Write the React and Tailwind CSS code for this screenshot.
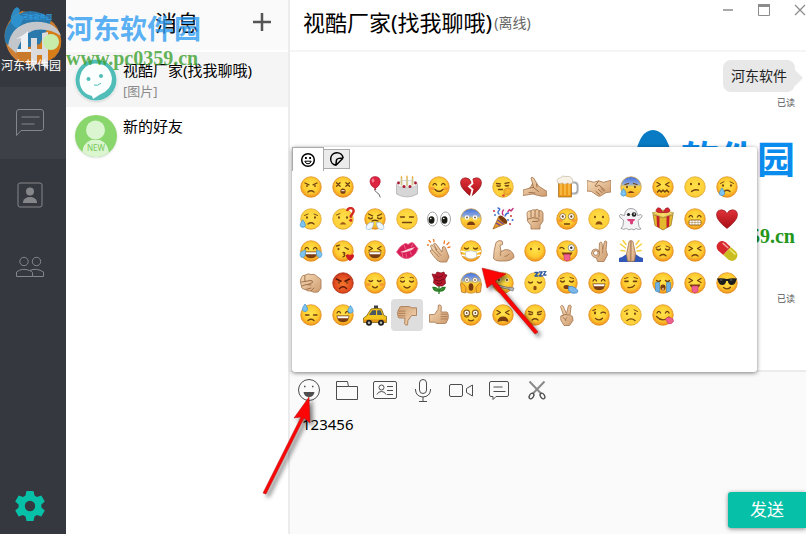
import React, { useState } from 'react';
import clsx from 'clsx';

const BROWN = '#70420f';

/* ---------- emoji parts (24 x 24 canvas) ---------- */

function EmojiDefs() {
  return (
    <svg className="absolute h-0 w-0" aria-hidden="true">
      <defs>
        <radialGradient id="faceYellow" cx="50%" cy="42%" r="58%">
          <stop offset="0" stopColor="#ffe44d" />
          <stop offset="0.65" stopColor="#fdc92e" />
          <stop offset="1" stopColor="#f08f1c" />
        </radialGradient>
        <radialGradient id="facePale" cx="50%" cy="45%" r="60%">
          <stop offset="0" stopColor="#ffe04a" />
          <stop offset="0.8" stopColor="#fdcf38" />
          <stop offset="1" stopColor="#e9a92c" />
        </radialGradient>
        <radialGradient id="faceRed" cx="50%" cy="55%" r="58%">
          <stop offset="0" stopColor="#f4752c" />
          <stop offset="0.7" stopColor="#e04a20" />
          <stop offset="1" stopColor="#b92d14" />
        </radialGradient>
        <linearGradient id="faceBlue" x1="0" y1="0" x2="0" y2="1">
          <stop offset="0" stopColor="#3f6fe0" />
          <stop offset="0.35" stopColor="#8fa9dc" />
          <stop offset="0.5" stopColor="#fdd43c" />
          <stop offset="1" stopColor="#f5a623" />
        </linearGradient>
        <linearGradient id="skin" x1="0" y1="0" x2="1" y2="1">
          <stop offset="0" stopColor="#f6dcb8" />
          <stop offset="1" stopColor="#cf9c70" />
        </linearGradient>
        <linearGradient id="heartRed" x1="0" y1="0" x2="0" y2="1">
          <stop offset="0" stopColor="#e0333a" />
          <stop offset="1" stopColor="#a80d14" />
        </linearGradient>
      </defs>
    </svg>
  );
}

const FACE_FILL = {
  yellow: ['url(#faceYellow)', '#dd8a1d'],
  pale: ['url(#facePale)', '#dca42c'],
  red: ['url(#faceRed)', '#a52a12'],
  blue: ['url(#faceBlue)', '#c99a3c'],
};

function Face({ tone = 'yellow', children }) {
  const [fill, stroke] = FACE_FILL[tone];
  return (
    <>
      <circle cx="12" cy="12" r="10.3" fill={fill} stroke={stroke} strokeWidth="0.7" />
      {children}
    </>
  );
}

const Line = ({ d, w = 1.3, c = BROWN }) => (
  <path d={d} fill="none" stroke={c} strokeWidth={w} strokeLinecap="round" strokeLinejoin="round" />
);
const Skin = ({ d }) => <path d={d} fill="url(#skin)" stroke="#a3734c" strokeWidth="0.8" strokeLinejoin="round" />;
const Dots = ({ y = 9.5, dx = 4, r = 1.3 }) => (
  <g fill={BROWN}>
    <ellipse cx={12 - dx} cy={y} rx={r * 0.8} ry={r} />
    <ellipse cx={12 + dx} cy={y} rx={r * 0.8} ry={r} />
  </g>
);
const Happy = () => <Line d="M6 10q1.8-3.4 3.6 0M14.4 10q1.8-3.4 3.6 0" />;
const Closed = ({ y = 10 }) => <Line d={`M5.5 ${y}q2.2 2 4 0M14.5 ${y}q2.2 2 4 0`} />;
const Squeeze = () => <Line d="M6 7.5l3.5 2L6 11.5M18 7.5l-3.5 2 3.5 2" />;
const Frown = ({ y = 17 }) => <Line d={`M9 ${y}q3-2.6 6 0`} />;
const Smile = () => <Line d="M8 14.5q4 4 8 0" />;
const Blush = () => (
  <g fill="#f57a3a" opacity="0.6">
    <ellipse cx="5.5" cy="13.5" rx="2.4" ry="1.6" />
    <ellipse cx="18.5" cy="13.5" rx="2.4" ry="1.6" />
  </g>
);
const Drop = ({ x, y }) => (
  <path d={`M${x} ${y}q3.4 4.6 2.4 6.4q-2.4 2.6-4.8 0q-1-1.8 2.4-6.4z`} fill="#7cc4ef" stroke="#3f92cf" strokeWidth="0.7" />
);
const Grin = () => (
  <>
    <path d="M5.5 12.5h13q-.6 6.8-6.5 6.8t-6.5-6.8z" fill="#7a3d10" />
    <path d="M6.3 13.2h11.4l-.5 2H6.8z" fill="#fff" />
  </>
);
const HEART = 'M12 21.5Q1.5 13.5 1.5 7.8Q1.8 3 6.4 2.8Q10.4 2.8 12 6.6Q13.6 2.8 17.6 2.8Q22.2 3 22.5 7.8Q22.5 13.5 12 21.5z';
const THUMB = 'M2.5 11.5h5l3.6-5.2.3-4.2q2.3-1 3 1.5l-.4 5.4h5.6q1.8.5 1.2 2.1q1.3 1 .4 2.5q.8 1.2-.4 2.3q.4 1.6-1 2.2q.1 2.2-2 2.4H9.8l-2.4-1.3H2.5z';

/* ---------- emoji list ---------- */

const EMOJIS = [
  { name: 'angry', art: <Face><Line d="M6 8l4 1.8M18 8l-4 1.8" /><Dots y={11} r={1.1} /><Frown /></Face> },
  { name: 'dizzy', art: <Face><Line d="M5.500 7.800l3.600 3.400M9.100 7.800l-3.600 3.400M14.900 7.800l3.600 3.400M18.500 7.800l-3.600 3.400" /><ellipse cx="12" cy="16.200" rx="2.600" ry="2.600" fill="#7a3d10" /><path d="M10.400 15.200h3.200v1h-3.200z" fill="#fff" /></Face> },
  { name: 'balloon', art: <><Line c="#555" w={0.9} d="M12 13q-1 3 1.800 4.600q3 1.200 3.400 4.400" /><path d="M12 1.500q5.500.3 5.300 5.400q-.6 4-5 6.600q-5-2.600-5.300-6.600q-.2-5 5-5.400z" fill="#dd2440" stroke="#a91530" strokeWidth=".6" /><ellipse cx="10" cy="5.500" rx="1.300" ry="2" fill="#f5808d" /><path d="M11 14.800l1.200-1.800 1.200 1.800z" fill="#b11832" /></> },
  { name: 'cake', art: <><path d="M1.500 9v10q10.500 6 21 0V9z" fill="#d6d6d6" stroke="#a0a0a0" strokeWidth=".6" /><ellipse cx="12" cy="9" rx="10.500" ry="3.600" fill="#f6f6f6" stroke="#b5b5b5" strokeWidth=".5" /><Line c="#d2c58c" w={1.800} d="M6.500 9.500V3.500M12 10.500V3M17.500 9.500V3.500" /><path d="M6.500 .5l1 2.500h-2zM12 0l1 2.500h-2zM17.500 .5l1 2.500h-2z" fill="#f5a623" /><g fill="#a61a32"><circle cx="3.500" cy="8" r="1.400" /><circle cx="9" cy="11.500" r="1.500" /><circle cx="15" cy="11.500" r="1.500" /><circle cx="20.500" cy="8" r="1.400" /></g></> },
  { name: 'blush', art: <Face><Blush /><Happy /><Smile /></Face> },
  { name: 'broken heart', art: <><path d={HEART} fill="url(#heartRed)" stroke="#7e0b12" strokeWidth=".6" /><path d="M12.500 4l1 4.500-3.500 3 3.500 3-2 8" fill="none" stroke="#fff" strokeWidth="1.800" /></> },
  { name: 'hush', art: <Face tone="pale"><Line d="M5.500 8.500l4 .3M14 8.300l4-.6" /><Line d="M6 10.800q1.600.8 3.200 0M14.300 10.500q1.600.8 3.200 0" w={1.500} /><Line d="M7.500 14.500h4" /><path d="M13 15q3-3 6.500-1.800q2 3-1 5.600q-3 1.800-5.600-.4z" fill="#f7b52c" stroke="#c9822a" strokeWidth=".7" /><circle cx="12.500" cy="20.500" r="1.300" fill="#e54a30" /></Face> },
  { name: 'nudge', art: <><Skin d="M0 15l7-2 2.500-4.500L8 3q.8-1.800 2.500 0l5 8 8.500 5.500v4.300q-5 1.200-9-.3l-5-1.500L0 20.500z" /><Line c="#996a44" w={0.9} d="M9.500 8.500l1 4 5 4M7 13l3.500-.5M6 17.500l6 .5M13.500 9l.5 3" /></> },
  { name: 'beer', art: <><path d="M16 7.500h4q2.600.5 2.600 3.500v4.500q-.4 3-3 3H16" fill="none" stroke="#a8acb0" strokeWidth="2" /><path d="M3.500 5h13v17h-13z" fill="#ec9a1c" stroke="#a1671b" strokeWidth=".7" /><path d="M6 9v11M10 9v11M14 9v11" stroke="#f9c24d" strokeWidth="1.500" /><path d="M2.500 7.500Q.8 3.500 5 3q2-3 6-1.500q4-.8 5.500 1.500q2.500 1.500.8 5q-3 2-4.800 0q-3 2.500-5 0q-3 1.500-5-.5z" fill="#f7f1e6" stroke="#bdb29b" strokeWidth=".6" /></> },
  { name: 'handshake', art: <><Skin d="M0 5.500l7 1.800 4.500-1.500 5 1.500 7.500-2V17l-5 .6-5.500 3.400q-2 .6-3.500-.7L4.500 16.500 0 16z" /><Line c="#996a44" w={0.9} d="M11.500 6l-3.500 5q1.500 1.500 4-1l6 5.500M9 16.500l3.500 3M11.500 14.500l3.500 3M14 13.500l3 2.800" /></> },
  { name: 'cold sweat', art: <Face tone="blue"><Line d="M6 9.500l3.500-1M18 9.500l-3.500-1" /><Dots y={12} r={1.2} /><path d="M8.500 18q3.500-4 7 0z" fill="#7a3d10" /><Drop x={4.5} y={13.5} /></Face> },
  { name: 'confounded', art: <Face><Squeeze /><Line d="M6.500 17l1.800-2 1.900 2 1.800-2 1.900 2 1.800-2 1.800 2" w={1.400} /></Face> },
  { name: 'confused', art: <Face tone="pale"><Dots y={9} /><Line d="M8.500 16.500q3-2.600 7-1.300" /></Face> },
  { name: 'cry', art: <Face><Line d="M5.500 8.500l3.500-1.800M18.500 8.500L15 6.700" w={0.9} /><Dots y={10.5} r={1.2} /><Frown y={16.5} /><Drop x={7} y={13} /></Face> },

  { name: 'disappointed relieved', art: <Face tone="pale"><Line d="M5.500 8.500L9 7M18.500 8.500L15 7" w={0.9} /><Dots y={10.5} r={1.2} /><Frown y={17} /><Drop x={3.8} y={12.8} /></Face> },
  { name: 'puzzled', art: <Face tone="pale"><Line d="M5.500 8l3.500-1.500" w={0.9} /><Dots y={10.5} r={1.2} /><path d="M8.500 17.500q3.500-5 7 0z" fill="#a25b16" /><path d="M16 4q1-3.500 4.500-2.800q3.500 1.500 1.300 5l-2 2.600v2" fill="none" stroke="#d42a26" strokeWidth="2.400" /><circle cx="19.800" cy="13.300" r="1.500" fill="#d42a26" /></Face> },
  { name: 'triumph', art: <Face><Line d="M5.500 7l4 1.800M18.500 7l-4 1.800" /><Closed y={10.8} /><Line d="M9 14q3-1.500 6 0" /><path d="M9.500 15.500Q5 15 3.500 19q-1.500 3.500 2.500 3.500q4.500-.5 4.500-7zM14.500 15.500Q19 15 20.500 19q1.500 3.500-2.500 3.500q-4.500-.5-4.500-7z" fill="#f0f7fd" stroke="#8fb8dc" strokeWidth=".7" /></Face> },
  { name: 'expressionless', art: <Face tone="pale"><Line d="M5.500 10h4M14.500 10h4M7.500 15.500h9" /></Face> },
  { name: 'eyes', art: <><g fill="#fff" stroke="#9a9a9a" strokeWidth=".9"><ellipse cx="5.500" cy="12" rx="5" ry="7" /><ellipse cx="18.500" cy="12" rx="5" ry="7" /></g><g fill="#1b1b16"><ellipse cx="4.500" cy="13" rx="3" ry="3.700" /><ellipse cx="17.500" cy="13" rx="3" ry="3.700" /></g><circle cx="3.800" cy="11.500" r=".8" fill="#fff" /><circle cx="16.800" cy="11.500" r=".8" fill="#fff" /></> },
  { name: 'fearful', art: <Face tone="blue"><g fill="#fff"><circle cx="8" cy="10.500" r="2.300" /><circle cx="16" cy="10.500" r="2.300" /></g><Dots y={10.5} r={1} /><path d="M8 18q.3-3.500 4-3.500t4 3.500z" fill="#7a3d10" /></Face> },
  { name: 'party popper', art: <><path d="M2 22L8 9q5 2 8 7z" fill="#e39a2b" stroke="#9c5d16" strokeWidth=".7" /><path d="M5 16l4.500 2.500M6.500 13l6 4" stroke="#6b3fa0" strokeWidth="1.200" /><ellipse cx="12" cy="12.500" rx="2.200" ry="5.200" transform="rotate(-48 12 12.500)" fill="#7a3d10" /><Line c="#3e6fd1" w={1.4} d="M8 7Q6 5 8 3.500T7 1M14 9q1-3 3.500-3" /><Line c="#c7327a" w={1.4} d="M12 8q-1.500-3 .5-5M17 4.500l1.500-2 1.500 1.500 2-2.500" /><g fill="#d13438"><circle cx="3" cy="4" r="1" /><circle cx="20" cy="9" r="1" /><circle cx="19" cy="17" r="1" /></g><g fill="#3e6fd1"><circle cx="21.500" cy="13" r="1" /><circle cx="4" cy="8" r="1" /><circle cx="17" cy="13" r=".9" /></g></> },
  { name: 'fist', art: <><Skin d="M4 6q1-3 4-2 1-2 4-1 2.500-1.500 4 .5 3.500-.5 4 2.500v8l-3 4.500V22H8v-3.500L4.500 14z" /><Line c="#996a44" w={0.9} d="M8 4v6M12 3.500V10M16 4v6M5 12q5-2.500 10-.5 3 2-1 3H9.500" /></> },
  { name: 'flushed', art: <Face><Blush /><g fill="#fff" stroke="#8f6320" strokeWidth=".8"><circle cx="7.700" cy="9.500" r="3" /><circle cx="16.300" cy="9.500" r="3" /></g><Dots y={9.5} dx={4.3} r={1.3} /><Line d="M9.500 17h5" /></Face> },
  { name: 'frowning', art: <Face tone="pale"><Dots y={10} r={1.2} /><path d="M8.500 17.800q.3-3.500 3.500-3.500t3.500 3.500q-3.500-1.300-7 0z" fill="#8b4d12" /></Face> },
  { name: 'ghost', art: <><path d="M12 1.500q6 0 6.500 7l3.500-1q2 1 .5 3l-3.500 3 1 6 2 2.500q-3 1-5-.5-2 2.500-4.500.5-3 2-5-.5-3 1.500-5.500 0l2-3 .5-5.500L1 10.500q-1.500-2.500.5-3l4 1q.5-7 6.500-7z" fill="#f3f3f5" stroke="#8d8d93" strokeWidth=".8" /><circle cx="9.500" cy="7.500" r="1.600" fill="#222" /><circle cx="15" cy="7.500" r="2.300" fill="#222" /><circle cx="15.300" cy="7" r=".8" fill="#fff" /><path d="M8 12h8q-.5 2.500-2 2.500v2q-1.500 2-3 0v-2Q8.500 14.500 8 12z" fill="#d9407c" /></> },
  { name: 'gift', art: <><path d="M2 7.500l10 3.500 10-3.500-2 11-8 4.500-8-4.500z" fill="#e5b92d" stroke="#95701a" strokeWidth=".7" /><path d="M1 6l11-3 11 3-11 4.500z" fill="#f6dc66" stroke="#a58222" strokeWidth=".6" /><path d="M5.500 8.500l3 1.200V21L6 19.500zM18.500 8.500l-3 1.200V21l2.500-1.500z" fill="#c21f2b" /><path d="M12 5.500Q6 6.500 5 3.500Q6-.5 9.500 1.500zM12 5.500q6 1 7-2Q18-.5 14.500 1.500z" fill="#d4242f" stroke="#8e121b" strokeWidth=".6" /></> },
  { name: 'grimacing', art: <Face><Happy /><rect x="6" y="13" width="12" height="5" rx="1.500" fill="#fff" stroke="#8b5a1c" strokeWidth=".9" /><path d="M6 15.500h12M9 13v5M12 13v5M15 13v5" stroke="#b08a50" strokeWidth=".6" /></Face> },
  { name: 'heart', art: <path d={HEART} fill="url(#heartRed)" stroke="#8e0b12" strokeWidth=".6" /> },

  { name: 'joy', art: <Face><Happy /><Grin /><path d="M6.500 11Q1 12 1 16q.8 3.500 3.500 2.300Q7 17 6.500 11zM17.500 11q5.500 1 5.500 5-.8 3.500-3.500 2.300-2.500-1.300-2-7.300z" fill="#7cc4ef" stroke="#3f92cf" strokeWidth=".6" /></Face> },
  { name: 'kissing heart', art: <Face><Line d="M5.500 7l3-.8M14 8.500l3.500 1.800" /><ellipse cx="7.500" cy="10" rx="1" ry="1.300" fill={BROWN} /><Line d="M12 13.500q3 .3 1 2 2 1.500-1 2.300" /><path d="M19 22q-4.500-3-4-5.800 1.500-2 4 0 2.500-2 4 0 .5 2.800-4 5.800z" fill="#cf1c24" /></Face> },
  { name: 'laughing', art: <Face><Squeeze /><Grin /></Face> },
  { name: 'kiss mark', art: <><path d="M1.500 13Q5 6.500 10 4.500q1.500-.5 3 1Q17 2 19 4.500q2 3 4 5-2 7-8.500 9.500-7 2.500-13-6z" fill="#d81f55" stroke="#e8648a" strokeWidth=".8" /><path d="M5 13q4-1 8-3l7-2Q17.500 11.500 13 12.500q-5 1.500-8 .5z" fill="#fbd3de" /><path d="M7 14l1 4M11 14.500l.5 4M15 12.500l1.500 3.500M9 6l1.500 4M17.500 5l-1 3" stroke="#f07a9c" strokeWidth=".8" /></> },
  { name: 'clap', art: <><Skin d="M3 12q1-2 2.500-.5L3.500 7q1-2 2.500-.5L10 11 6.500 5q1.300-1.500 2.500 0l6 8 .5-5q2-1.500 3 1l3.500 9-2.500 5h-6q-4-1-10.500-11z" /><Line c="#a3734c" w={0.8} d="M6 11.500l6 6.500M8.500 10.500l5.500 6" /><Line c="#f07c2a" w={1.3} d="M3.500 3L2 1.500M7 2.500L6.500 0M1.500 6L0 6M17 4.500l.5-2.500M20 5.500l2-2M21 8.500l2-.5" /></> },
  { name: 'mask', art: <Face><Closed y={9} /><path d="M1.800 12l5.500 1.500M22.200 12l-5.500 1.500M2.500 16l5 1M21.500 16l-5 1" stroke="#fff" strokeWidth="1.400" /><path d="M6.500 13q5.500-2.500 11 0v5q-5.500 3.500-11 0z" fill="#fff" stroke="#b9c3c9" strokeWidth=".7" /></Face> },
  { name: 'muscle', art: <><Skin d="M5 3.500Q7.500.5 11 2q1 2 .5 3.500L9 6.500l1 6q4-3 8-1.500 5 2.500 5 7.500-4 4-11 3.500-7 .5-9.500-2.500Q2.500 12 5 3.500z" /><Line c="#a3734c" w={0.9} d="M10 12.500q-1.500 2-.5 4M14 17.500q3-.5 4-2.500" /></> },
  { name: 'no mouth', art: <Face><Dots y={10} r={1.2} /></Face> },
  { name: 'winking tongue', art: <Face><circle cx="16.300" cy="8.800" r="3.200" fill="#fff" stroke="#777" strokeWidth=".8" /><circle cx="16.300" cy="8.800" r="1.200" fill="#333" /><Line d="M5 9q2-1.500 4 .8" /><path d="M6.500 13.500h11q-1.500 4-5.500 4t-5.500-4z" fill="#7a3d10" /><path d="M9 15.300h6V20q-3 4-6 0z" fill="#f0608f" stroke="#c43e6c" strokeWidth=".6" /></Face> },
  { name: 'ok hand', art: <><Skin d="M12 13l.5-9q1.300-2 2.500 0l.7 6L17.500 2.500q1.600-1.500 2.300.5L19 11l1.500 5-3.500 6.500h-6.500l-1-3.500Q4.500 18 4.500 14q.5-4 4-4 3 0 3.500 3z" /><circle cx="8.800" cy="14" r="2.300" fill="#fff" stroke="#a3734c" strokeWidth=".8" /><Line c="#a3734c" w={0.8} d="M15.700 10v4M12.500 13q1 3-1.500 5" /></> },
  { name: 'pray', art: <><Line c="#f7cf3e" w={1.5} d="M6.500 9L1.500 5M7 5.500l-3-4M17.500 9l5-4M17 5.500l3-4M6 12l-4-.5M18 12l4-.5" /><path d="M0 23v-4q4-1 7.500-4l1.500 4h6l1.500-4q3.500 3 7.500 4v4z" fill="#3157b7" /><Skin d="M11.700 1.500q-2.200 0-2.200 4L7.500 15l1 7 3.500.5z" /><Skin d="M12.300 1.500q2.200 0 2.200 4l2 9.500-1 7-3.500.5z" /></> },
  { name: 'pensive', art: <Face><Line d="M5 8.500l4-1.500M19 8.500L15 7" w={0.9} /><Closed /><Frown y={16.8} /></Face> },
  { name: 'persevere', art: <Face><Squeeze /><Frown y={17} /></Face> },
  { name: 'pill', art: <g transform="rotate(42 12 12)"><path d="M12 6.500H5q-5 1-5 5.500t5 5.500h7z" fill="#d6262c" /><path d="M12 6.500h7q5 1 5 5.500t-5 5.500h-7z" fill="#c9bd1f" /><path d="M4 9h6.500" stroke="#f6a3a0" strokeWidth="1.500" strokeLinecap="round" /><path d="M13.500 9H20" stroke="#eee678" strokeWidth="1.500" strokeLinecap="round" /></g> },

  { name: 'punch', art: <><Skin d="M2 7q1-3 4.500-3Q9 2 12 3.500q4-1 5.500 1.500L22 8.500v9L19 21q-5 1-7-1-4 .5-5.500-1.500Q2 18 2.500 15 .5 11.500 2 7z" /><Line c="#996a44" w={0.9} d="M6 4.500q-.5 4 0 6l5-1q3-.5 2.500 2L9 13.500M2.500 11l4-.5M3 15l4-1.500 5 .5M7 18.500l5-1.500M12 20l3-3" /></> },
  { name: 'rage', art: <Face tone="red"><Line d="M5.500 8l4.500 2.200M18.500 8L14 10.200" c="#5b1608" w={1.6} /><Dots y={11.5} r={1.2} /><Line d="M8.500 17.500q3.500-3.400 7 0" c="#5b1608" /></Face> },
  { name: 'relaxed', art: <Face><Blush /><Line d="M6 9.500q1.800 2 3.600 0M14.400 9.500q1.800 2 3.600 0" /><Line d="M9.500 15.500q2.500 2.600 5 0" /></Face> },
  { name: 'relieved', art: <Face><Line d="M5.500 7q1.800-1.300 3.500-.5M18.500 7q-1.800-1.300-3.500-.5" w={0.9} /><Closed /><Line d="M9 15.500q3 3 6 0" /></Face> },
  { name: 'rose', art: <><path d="M12 13v10M12 20q-5 .5-6-3.500 4-.5 6 3.500zM12 20q5 .5 6-3.500-4-.5-6 3.500z" fill="#3d9a35" stroke="#2b7a27" strokeWidth="1.300" /><path d="M5 3l3.500.5L10 1l4 1 3-1 .8 2.500 2.200.5-2 4 .5 4.500-3 2.500h-5L6.500 12 7 8z" fill="#b3152b" stroke="#7b0b1a" strokeWidth=".7" /><path d="M8 5q4 3 8-1M8 9q4 2.500 9-1M10 12.500q3 .5 5-1" fill="none" stroke="#7b0b1a" strokeWidth="1" /></> },
  { name: 'scream', art: <Face tone="blue"><g fill="#fff" stroke="#8f6320" strokeWidth=".5"><circle cx="8" cy="9" r="2.500" /><circle cx="16" cy="9" r="2.500" /></g><Dots y={9} r={0.9} /><ellipse cx="12" cy="16" rx="2.400" ry="3.800" fill="#7a3d10" /><path d="M1.500 13q1.500-2.500 3 0L7 16.500 6.500 22l-4-1zM22.500 13q-1.500-2.500-3 0L17 16.500l.5 5.500 4-1z" fill="#fbb32c" stroke="#b26e1c" strokeWidth=".7" /></Face> },
  { name: 'zipped', art: <Face><g fill="#fff7d0"><circle cx="8" cy="9" r="2" /><circle cx="16" cy="9" r="2" /></g><Dots y={9} r={1.2} /><Line d="M7 15l11 2.500" c="#77715f" w={2.6} /><Line d="M7 15l11 2.500" c="#d5d0c0" w={0.8} /><path d="M18 16l5 1-1 3-4-1z" fill="#b4b4b4" stroke="#6d6d6d" strokeWidth=".6" /></Face> },
  { name: 'sleeping', art: <Face tone="pale"><Closed y={11} /><ellipse cx="12" cy="17" rx="1.700" ry="2.200" fill="#8b4d12" /><Line c="#2d5aa0" w={1.4} d="M12 1.500h3l-3 3.500h3M16.500 1h2.700l-2.700 4h2.700M20.500 0H23l-2.500 4H23" /></Face> },
  { name: 'sleepy', art: <Face><Line d="M5.500 7.500L9 6.500M18.500 7.500L15 6.500" w={0.9} /><Closed /><ellipse cx="11.500" cy="16" rx="3" ry="2" fill="#7a3d10" /><path d="M13.500 15.500q4-1 7 1.500 4 3.500 1 5-5 1.500-8-2.500z" fill="#7ab8ea" stroke="#3b82c4" strokeWidth=".7" /></Face> },
  { name: 'grinning', art: <Face><Happy /><Grin /></Face> },
  { name: 'smirk', art: <Face><Line d="M5.500 7.500l3.500-1M18.500 7.500l-3.500-1" w={0.9} /><Line d="M6 10.300h3M14.500 10.300h3" w={1.7} /><Line d="M9 16.500q4 .8 6.500-2.200" /></Face> },
  { name: 'sob', art: <Face><Closed y={9.5} /><path d="M4.500 11.500h4v10l-4-1.500zM15.500 11.500h4V20l-4 1.500z" fill="#6db0e6" stroke="#3e86c4" strokeWidth=".6" /><ellipse cx="12" cy="16.500" rx="2.600" ry="3" fill="#7a3d10" /><circle cx="12" cy="18" r="1.300" fill="#d9a16c" /></Face> },
  { name: 'tongue', art: <Face><Squeeze /><path d="M6.500 13.500h11q-1.500 4-5.500 4t-5.500-4z" fill="#7a3d10" /><path d="M9 15h6v5q-3 4-6 0z" fill="#f0608f" stroke="#c43e6c" strokeWidth=".6" /></Face> },
  { name: 'sunglasses', art: <Face><path d="M2 7.500q5-.8 10 .5 5-1.300 10-.5l-.8 1.800q-.8 4.700-4.700 4.700-3 0-3.700-4h-1.600q-.7 4-3.700 4-3.900 0-4.700-4.700z" fill="#1d1d1d" /><path d="M5 9h2.500M15 9h2.500" stroke="#7a7a7a" strokeWidth=".9" /><Line d="M8.500 16.500q4 3 7-.3" /></Face> },

  { name: 'sweat', art: <Face><Line d="M6.500 12h3.500M14.500 12H18" /><Frown y={17.5} /><Drop x={6} y={1} /></Face> },
  { name: 'sweat smile', art: <Face><Happy /><Grin /><Drop x={19.5} y={2.5} /></Face> },
  { name: 'taxi', art: <><path d="M11 2.500h4v3h-4z" fill="#3f3f3f" /><path d="M3.500 13L8 6q5-1.500 10.500 0l2.500 6.500 2.500 1v6H.5V15z" fill="#f4c51e" stroke="#7a5d10" strokeWidth=".8" /><path d="M6 12l3.300-4.800H13V12zM14.200 7.200h3.300l2 4.800h-5.300z" fill="#4b5864" /><path d="M.5 16.500h23v2.500H.5z" fill="#e39318" /><g fill="#1f1f1f"><circle cx="6" cy="19.800" r="3" /><circle cx="18" cy="19.800" r="3" /></g><g fill="#bbb"><circle cx="6" cy="19.800" r="1.200" /><circle cx="18" cy="19.800" r="1.200" /></g></> },
  { name: 'thumbs down', art: <g transform="matrix(-1 0 0 1 24 0) rotate(180 12 12) translate(24 0) scale(-1 1)"><Skin d={THUMB} /><Line c="#a3734c" w={0.8} d="M14 11.200h6M14 13.600h6.300M14 15.900h6" /></g> },
  { name: 'thumbs up', art: <><Skin d={THUMB} /><Line c="#a3734c" w={0.8} d="M14 11.200h6M14 13.600h6.300M14 15.900h6" /></> },
  { name: 'weary', art: <Face><g fill="#fff" stroke="#8f6320" strokeWidth="1.200"><circle cx="7.700" cy="10" r="2.900" /><circle cx="16.300" cy="10" r="2.900" /></g><Dots y={10} dx={4.3} r={1} /><Line d="M5.500 13.500q2 1.500 4 .3M14.500 13.800q2 1.200 4-.3" w={0.9} /><Line d="M9.500 17q2.500 1.800 5 0" /></Face> },
  { name: 'tired', art: <Face><Squeeze /><path d="M6.500 19q.5-5.500 5.500-5.500t5.500 5.500q-5.500-2-11 0z" fill="#7a3d10" /></Face> },
  { name: 'unamused', art: <Face><Line d="M5.500 8.500l4 .8M18.500 8.500l-4 .8" /><Line d="M6 11q2 1 3.500 0M14.500 11q2 1 3.500 0" w={1.5} /><Frown y={17} /></Face> },
  { name: 'victory', art: <><Skin d="M8.500 12L5.500 3.500q1-2 2.500-.5l3.500 7.500 2-8q1.700-1.300 2.700.5L15 12l2.500 1.500.5 4-3.500 5H9L5.800 17v-4z" /><Line c="#a3734c" w={0.9} d="M7 13l3-1.500 4 .5M8 14.500l3 2.500M12 14.500q-2 .8-1.500 3" /></> },
  { name: 'wink', art: <Face><ellipse cx="8" cy="10" rx="1.100" ry="1.400" fill={BROWN} /><Line d="M6 7.500l2.500-1M14 10q2-1.800 4.500 0" /><Line d="M8.500 15.500q4 3 7-.3" /></Face> },
  { name: 'worried', art: <Face tone="pale"><Line d="M5.500 8.500L9 6.800M18.500 8.500L15 6.800" w={0.9} /><Dots y={10.8} r={1.2} /><Line d="M8 17.500q4-3.200 8 0" /></Face> },
  { name: 'yum', art: <Face><Happy /><Line d="M5.500 13.500q6 6.500 12.500.5" /><path d="M14.500 16.500q1-3 4.500-2 4 1 3.500 4-2 3.500-5.500 2z" fill="#f0608f" stroke="#c43e6c" strokeWidth=".6" /></Face> },
];

/* ---------- line icons ---------- */

const Icon = ({ size = 24, box = 24, className, children }) => (
  <svg width={size} height={size} viewBox={`0 0 ${box} ${box}`} fill="none" stroke="currentColor" className={className} aria-hidden="true">
    {children}
  </svg>
);

const TOOLS = [
  { name: '表情', art: <><circle cx="12" cy="12" r="10.500" /><path d="M7 8.500h1.500M15 8.500h1.500" strokeWidth="1.500" /><path d="M6.500 14h11q-.8 5-5.500 5t-5.500-5z" fill="currentColor" stroke="none" /></> },
  { name: '文件', art: <path d="M1.500 21.500v-18h11l1 5h9v13zM1.500 8.500h12" /> },
  { name: '名片', art: <><rect x=".5" y="3.500" width="23" height="17" rx="1.500" /><circle cx="8.500" cy="9.500" r="2.500" /><path d="M4 16.500q1-3 4.500-3t4.500 3M14 8.500h6M14 12.500h6M14 16.500h6" /></> },
  { name: '语音', art: <><rect x="8.500" y="1.500" width="7" height="14" rx="3.500" /><path d="M4.500 11v1q.5 6.500 7.500 7 7-.5 7.500-7v-1M12 19v4M8 23.500h8" /></> },
  { name: '视频', art: <><rect x=".5" y="6.500" width="13" height="12" rx="1.500" /><path d="M17.500 10.500l6-3.500v11l-6-3.500z" /></> },
  { name: '消息记录', art: <path d="M4 3.500h16q1.500 0 1.500 1.500v12q0 1.500-1.500 1.500H9l-3 3v-3H4q-1.500 0-1.500-1.500V5q0-1.500 1.500-1.500zM6.500 9h9M6.500 13.500h12" /> },
  { name: '截图', art: <><path d="M4.500 3.500L16.500 16M19.500 3.500L7.500 16" strokeWidth="2" stroke="#8a8a8a" /><ellipse cx="6.500" cy="18" rx="2" ry="3" transform="rotate(35 6.500 18)" strokeWidth="1.300" /><ellipse cx="17.500" cy="18" rx="2" ry="3" transform="rotate(-35 17.500 18)" strokeWidth="1.300" /></> },
];

const NAV = [
  { name: '消息', art: <path d="M4 1.500h22q2.500 0 2.500 2.500v16.500q0 2-2.500 2H6l-4.500 5V4q0-2.500 2.500-2.500zM6.500 9h18M6.500 16h13" /> },
  { name: '联系人', art: <><rect x="3" y="3" width="24" height="24" rx="2" /><circle cx="15" cy="11.500" r="4" fill="currentColor" stroke="none" /><path d="M8 23v-1.500q1.500-4.500 7-4.500t7 4.500V23z" fill="currentColor" stroke="none" /></> },
  { name: '群组', art: <><circle cx="9" cy="9.500" r="4.200" /><circle cx="21.500" cy="9.500" r="4.200" /><path d="M1.500 24.500V20q6-4.500 13-1.500 2 .5 3 2v4zM14.500 18.500q7-3 14 1.500v4.500h-11" /></> },
];

function AccountLogo() {
  return (
    <svg width="66" height="72" viewBox="0 0 66 72" aria-hidden="true">
      <path d="M14 56Q1 42 6 28q5-13 16-17l20 4q14 6 18 19 4 14-5 23-8 6-22 8-11-1-19-9z" fill="#c97a2b" />
      <path d="M41 24q17 2 20 15 1 11-9 19-6 5-14 6z" fill="#d77d18" />
      <path d="M5 42Q3 30 10 22q7-10 20-11 14 0 21 10L40 44 14 51z" fill="#2a79ad" />
      <path d="M8 46Q11 25 32 22q23-2 29 14-12-8-26-6Q21 34 16 54z" fill="#c3c6cb" />
      <path d="M16 39q8-4 12-8v18h4v3H17v-3h4V38z" fill="#eef1f3" />
      <path d="M31 38h6v11h5V33l6-1v38l-6-6v-9h-5v9l-6 3z" fill="#dcdcde" />
      <path d="M6 44q3 13 15 19l-5-10z" fill="#cf8035" />
      <path d="M13 11q4-7 7-1l-1 4 4 3q-1 9-7 11-7-5-5-12z" fill="#2d94d2" opacity=".9" />
      <ellipse cx="51" cy="42" rx="8" ry="8" fill="#c8edaa" />
    </svg>
  );
}

function SmileAvatar() {
  return (
    <svg width="42" height="42" viewBox="0 0 42 42" className="rounded-full shadow" aria-hidden="true">
      <circle cx="21" cy="21" r="20.500" fill="#50bdb8" />
      <path d="M20 4.500q15 0 17 15 0 11-12 16l-7 4.500-1-3Q5 34 4.500 21 6 6 20 4.500z" fill="#fbfffe" />
      <g fill="#50bdb8"><circle cx="13.500" cy="20" r="2" /><circle cx="26" cy="17" r="2" /></g>
      <path d="M19 26q4 1.500 7-2" fill="none" stroke="#50bdb8" strokeWidth="1" />
    </svg>
  );
}

function NewFriendAvatar() {
  return (
    <div className="relative h-[42px] w-[42px] overflow-hidden rounded-full bg-[#88d66c] shadow">
      <svg width="42" height="42" viewBox="0 0 42 42" aria-hidden="true">
        <circle cx="20.500" cy="15" r="9.500" fill="#daf5d0" />
        <path d="M7 38q1-10 9-13h9q8 3 9 13l-6 4H13z" fill="#daf5d0" />
      </svg>
      <span className="absolute inset-x-0 bottom-1 text-center text-[8px] leading-[10px] text-[#78c85a]">NEW</span>
    </div>
  );
}

/* ---------- page sections ---------- */

function Sidebar() {
  return (
    <nav className="flex w-[66px] shrink-0 flex-col bg-[#363840] text-[#85868a]">
      <div className="relative h-[87px]">
        <AccountLogo />
        <span className="absolute left-[1px] top-[57px] whitespace-nowrap text-[12px] leading-[18px] text-white">河东软件园</span>
        <span className="absolute left-[22px] top-2 whitespace-nowrap text-[6px] font-bold leading-[18px] text-[#2f9be0]">河东软件园</span>
      </div>
      {NAV.map((item, i) => (
        <button key={item.name} aria-label={item.name} className={clsx('flex h-[72px] items-center justify-center pr-1.5', i === 0 && 'bg-[#3d4047]')}>
          <Icon size={30} box={30}>{item.art}</Icon>
        </button>
      ))}
      <button aria-label="设置" className="mb-3 mt-auto flex justify-center pr-1.5 text-[#06c0a8]">
        <svg width="32" height="32" viewBox="0 0 32 32" aria-hidden="true">
          <path fillRule="evenodd" fill="currentColor" d="M12.500 1h7l1 4.500 2.500 1.400 4.300-1.500 3.500 6-3.400 3v3.200l3.400 3-3.500 6-4.300-1.500-2.500 1.400-1 4.500h-7l-1-4.500L9 25.100l-4.300 1.500-3.500-6 3.400-3v-3.200l-3.400-3 3.500-6L9 6.900l2.500-1.400zM16 10.800a5.200 5.200 0 1 0 0 10.400a5.200 5.200 0 1 0 0-10.400z" />
        </svg>
      </button>
    </nav>
  );
}

function Conversations() {
  return (
    <aside className="flex w-[224px] shrink-0 flex-col border-r-2 border-[#ececec] bg-white">
      <header className="relative flex h-[52px] items-center justify-center border-b-2 border-white bg-[#fafafa] pb-1.5">
        <h1 className="text-[22px] leading-[32px]">消息</h1>
        <button aria-label="新建" className="absolute right-4 top-3 text-[#555]">
          <Icon size={20} box={20}><path d="M10 1v18M1 10h18" strokeWidth="2.500" /></Icon>
        </button>
      </header>
      <ul>
        <li className="flex h-[55px] gap-1.5 bg-[#f5f5f5] pl-[9px] pt-[7px]">
          <SmileAvatar />
          <div>
            <p className="text-[15px] leading-[22px]">视酷厂家(找我聊哦)</p>
            <p className="text-[13px] leading-[20px] text-[#8c8c8c]">[图片]</p>
          </div>
        </li>
        <li className="flex h-[55px] gap-1.5 pl-[9px] pt-2">
          <NewFriendAvatar />
          <p className="text-[15px] leading-[22px]">新的好友</p>
        </li>
      </ul>
    </aside>
  );
}

function ChatHeader() {
  return (
    <header className="flex h-[52px] shrink-0 justify-between border-b-2 border-[#f5f5f5]">
      <h2 className="flex items-center gap-0.5 pb-1.5 pl-[13px] text-[22px]">
        视酷厂家(找我聊哦)
        <span className="text-[14px] text-[#666]">(离线)</span>
      </h2>
      <div className="flex gap-6 pt-1 text-[#8c8c8c]">
        <button aria-label="最小化" className="h-3 w-3"><Icon size={12} box={12}><path d="M1 6h10" strokeWidth="1.500" /></Icon></button>
        <button aria-label="最大化" className="h-3 w-3"><Icon size={12} box={12}><path d="M.5 1v10.500h11V1" /><path d="M0 1.500h12" strokeWidth="3" /></Icon></button>
        <button aria-label="关闭" className="h-3 w-3"><Icon size={12} box={12}><path d="M1 1l10 10M11 1L1 11" strokeWidth="1.300" /></Icon></button>
      </div>
    </header>
  );
}

function Messages() {
  return (
    <div className="flex flex-1 flex-col items-end overflow-hidden pr-[11px] pt-2">
      <div className="relative rounded-lg bg-[#e8e8e8] px-2 py-1.5 text-[14px] leading-[20px] text-[#222]">
        河东软件
        <svg width="8" height="16" viewBox="0 0 8 16" className="absolute -right-2 top-2.5" aria-hidden="true">
          <path d="M0 0l8 8-8 8z" fill="#e8e8e8" />
        </svg>
      </div>
      <span className="mt-1 text-[9px] leading-[14px] text-[#555]">已读</span>
      <div className="mt-5 flex h-[162px] flex-col items-end">
        <div className="flex items-start gap-2">
          <svg width="38" height="60" viewBox="0 0 38 60" aria-hidden="true">
            <path d="M0 26Q5 0 18 0t19 26v34H0z" fill="#087bc4" />
          </svg>
          <span className="text-[38px] font-bold leading-[56px] text-[#0a8cee]">软件园</span>
        </div>
        <span className="mt-8 font-['Liberation_Serif'] text-[20px] font-bold leading-[28px] text-[#24961a]">www.pc0359.cn</span>
      </div>
      <span className="text-[9px] leading-[14px] text-[#555]">已读</span>
    </div>
  );
}

function EmojiPanel({ onPick }) {
  return (
    <div className="absolute bottom-full left-0.5 h-[225px] w-[465px] rounded-[3px] bg-white shadow-[0_1px_4px_rgba(0,0,0,0.5)]">
      <div className="flex h-6 items-start">
        <button aria-label="表情" className="flex h-6 w-8 items-center justify-center border border-b-0 border-[#aaa] bg-white text-black">
          <Icon size={16} box={16}><circle cx="8" cy="8" r="6.300" strokeWidth="1.500" /><path d="M5 6h1.800M9.200 6H11" strokeWidth="1.800" /><path d="M4.800 9.200h6.400q-.8 2.600-3.200 2.600T4.800 9.200z" /></Icon>
        </button>
        <button aria-label="贴纸" className="mt-0.5 flex h-5 w-[26px] items-center justify-center border border-l-0 border-[#aaa] bg-[#ebebeb] text-black">
          <Icon size={16} box={16}><path d="M14.200 7A6.300 6.300 0 1 0 7 14.200M14.200 7l-7.200 7.200M14.200 7Q8 7 7.500 9t-.5 5.200" strokeWidth="1.500" /></Icon>
        </button>
      </div>
      <div className="grid grid-cols-[repeat(14,32px)] pl-[3px]">
        {EMOJIS.map((emoji) => (
          <button
            key={emoji.name}
            aria-label={emoji.name}
            onClick={() => onPick(emoji.name)}
            className={clsx('flex h-8 w-8 items-center justify-center rounded-sm', emoji.name === 'thumbs down' && 'bg-[#dedede]')}
          >
            <svg width="24" height="24" viewBox="0 0 24 24" aria-hidden="true">{emoji.art}</svg>
          </button>
        ))}
      </div>
    </div>
  );
}

function Composer() {
  const [draft, setDraft] = useState('123456');
  return (
    <section className="relative flex h-[164px] shrink-0 flex-col border-t-2 border-[#ececec] bg-[#fafafa]">
      <EmojiPanel onPick={(name) => setDraft((text) => `${text}[${name}]`)} />
      <div className="flex gap-3.5 pl-[7px] pt-1.5 text-[#4d4d4d]">
        {TOOLS.map((tool) => (
          <button key={tool.name} aria-label={tool.name}><Icon>{tool.art}</Icon></button>
        ))}
      </div>
      <textarea
        aria-label="输入消息"
        value={draft}
        onChange={(e) => setDraft(e.target.value)}
        className="mt-3 min-h-0 w-full flex-1 resize-none bg-transparent px-3 text-[15px] leading-[20px] text-black outline-none"
      />
      <button className="mb-1.5 h-9 w-[78px] shrink-0 self-end rounded-l-[3px] bg-[#06c0a8] text-[17px] text-white shadow-[0_1px_4px_rgba(0,0,0,0.45)]">
        发送
      </button>
    </section>
  );
}

// site stamp over the top left corner
function SiteStamp() {
  return (
    <div className="pointer-events-none absolute left-[66px] top-3 whitespace-nowrap font-bold">
      <p className="text-[27px] leading-[34px] text-[#2f9cf2]/80">河东软件园</p>
      <p className="font-['Liberation_Serif'] text-[20px] leading-[24px] text-[#3aa02c]/80">www.pc0359.cn</p>
    </div>
  );
}

function Arrows() {
  return (
    <svg width="560" height="520" viewBox="0 0 560 520" className="pointer-events-none absolute left-0 top-0 drop-shadow-[3px_3px_2px_rgba(0,0,0,0.5)]" aria-hidden="true">
      <g fill="#fb0505" stroke="#b01010" strokeWidth=".5">
        <path d="M309 397l-15 21 7-1-38 76 3 1 38-76 6 5z" />
        <path d="M482 268l5 20 5-4 43 50 3-2-43-51 11-7z" />
      </g>
    </svg>
  );
}

export default function App() {
  return (
    <div className="relative flex h-screen overflow-hidden bg-white font-['Noto_Sans','Noto_Sans_CJK_SC',sans-serif] text-black">
      <EmojiDefs />
      <Sidebar />
      <Conversations />
      <main className="flex min-w-0 flex-1 flex-col bg-white">
        <ChatHeader />
        <Messages />
        <Composer />
      </main>
      <SiteStamp />
      <Arrows />
    </div>
  );
}
